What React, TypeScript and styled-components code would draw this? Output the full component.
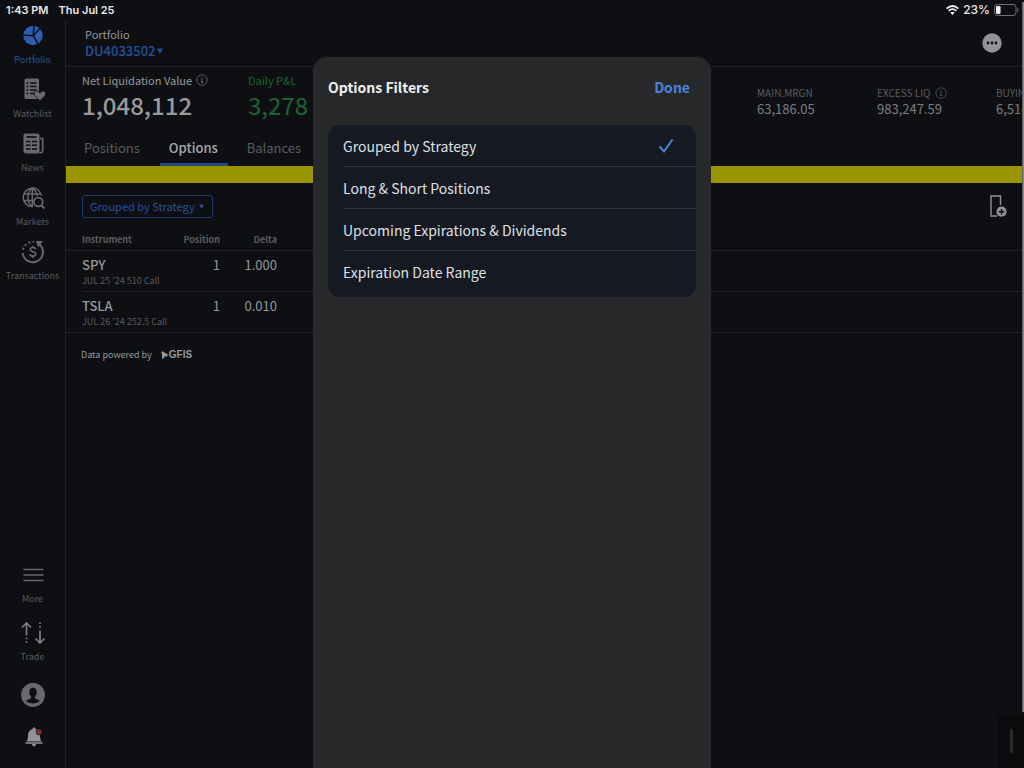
import React, { useState } from 'react';
import styled, { createGlobalStyle } from 'styled-components';

const c = {
  bg: '#0d0f13',
  line: '#202226',
  dim: '#5b5c5f',
  mid: '#7c7d80',
  text: '#96979a',
  blue: '#27519b',
  sheet: '#262829',
};

const Global = createGlobalStyle`
  *, *::before, *::after { box-sizing: border-box; }
  html, body { margin: 0; background: ${c.bg}; }
  body, button, input {
    font-family: "Noto Sans CJK SC", "Noto Sans", sans-serif;
  }
  button { border: 0; padding: 0; background: none; cursor: pointer; color: inherit; }
  svg { display: block; flex: none; }
`;

const Screen = styled.div`
  position: relative;
  display: flex;
  flex-direction: column;
  min-height: 100vh;
  overflow: hidden;
  background: ${c.bg};
  color: ${c.text};
`;

const StatusBar = styled.header`
  display: flex;
  justify-content: space-between;
  height: 20px;
  padding: 0 5px 0 6px;
  font: 600 11px/18px Inter, sans-serif;
  color: #e8e8ea;
`;

const StatusGroup = styled.div<{ $gap: number }>`
  display: flex;
  align-items: center;
  height: 20px;
  gap: ${(p) => p.$gap}px;
`;

const Percent = styled.span`
  font-size: 12px;
  font-weight: 500;
`;

const Body = styled.div`
  display: flex;
  flex: 1;
`;

const Sidebar = styled.aside`
  display: flex;
  flex-direction: column;
  justify-content: space-between;
  flex: none;
  width: 66px;
  border-right: 1px solid ${c.line};
`;

const NavList = styled.nav<{ $gap: number }>`
  display: flex;
  flex-direction: column;
  gap: ${(p) => p.$gap}px;
  padding-top: 4px;
`;

const NavItem = styled.a<{ $active?: boolean }>`
  display: flex;
  flex-direction: column;
  align-items: center;
  gap: 4px;
  font-size: 9px;
  line-height: 16px;
  text-decoration: none;
  color: ${(p) => (p.$active ? c.blue : c.dim)};
`;

const SidebarFoot = styled.div`
  display: flex;
  flex-direction: column;
  align-items: center;
  gap: 18px;
  padding-bottom: 19px;
`;

const Main = styled.main`
  flex: 1;
  min-width: 0;
`;

const AccountBar = styled.div`
  display: flex;
  align-items: center;
  justify-content: space-between;
  height: 47px;
  padding: 0 22px 1px 19px;
  border-bottom: 1px solid ${c.line};
`;

const AccountTitle = styled.div`
  font-size: 11px;
  line-height: 16px;
`;

const AccountButton = styled.button`
  display: flex;
  align-items: center;
  gap: 1px;
  font-size: 13px;
  line-height: 18px;
  font-weight: 500;
  color: ${c.blue};
`;

const Summary = styled.section`
  display: grid;
  grid-template-columns: 166px 1fr 267px;
  height: 62px;
  padding: 4px 0 0 16px;
  overflow: hidden;
`;

const Headline = styled.div<{ $green?: boolean }>`
  color: ${(p) => (p.$green ? '#1d6534' : '#98999c')};
  white-space: nowrap;
`;

const HeadlineLabel = styled.div`
  display: flex;
  align-items: center;
  gap: 4px;
  font-size: 11px;
  line-height: 18px;
`;

const HeadlineValue = styled.div<{ $strong?: boolean }>`
  font-size: 24px;
  line-height: 32px;
  font-weight: ${(p) => (p.$strong ? 500 : 400)};
`;

const Metrics = styled.div`
  display: grid;
  grid-template-columns: 120px 119px 120px;
  overflow: hidden;
  padding-top: 14px;
  white-space: nowrap;
`;

const MetricLabel = styled.div`
  display: flex;
  align-items: center;
  gap: 4px;
  font-size: 10px;
  line-height: 16px;
  color: ${c.dim};
`;

const MetricValue = styled.div`
  font-size: 13px;
  line-height: 15px;
  color: ${c.mid};
`;

const Tabs = styled.div`
  display: flex;
  gap: 10px;
  height: 37px;
  padding-left: 9px;
`;

const Tab = styled.button<{ $active?: boolean }>`
  padding: 3px 10px 0 9px;
  font-size: 13px;
  line-height: 30px;
  font-weight: ${(p) => (p.$active ? 500 : 400)};
  color: ${(p) => (p.$active ? '#a8a9ac' : c.dim)};
  border-bottom: 3px solid ${(p) => (p.$active ? '#274a80' : 'transparent')};
  border-radius: 2px 2px 0 0;
`;

const Banner = styled.div`
  height: 17px;
  background: #989500;
`;

const Toolbar = styled.div`
  display: flex;
  align-items: center;
  justify-content: space-between;
  height: 46px;
  padding: 0 17px 0 16px;
`;

const FilterButton = styled.button`
  display: flex;
  align-items: center;
  gap: 4px;
  height: 23px;
  padding: 0 8px 0 7px;
  border: 1px solid #1c3b72;
  border-radius: 3px;
  font-size: 11px;
  line-height: 20px;
  color: ${c.blue};
`;

const Table = styled.table`
  width: 100%;
  table-layout: fixed;
  border-collapse: separate;
  border-spacing: 0;
`;

const Th = styled.th<{ $left?: boolean; $w?: number }>`
  width: ${(p) => (p.$w ? `${p.$w}px` : 'auto')};
  height: 22px;
  padding: ${(p) => (p.$left ? '0 0 0 16px' : '0')};
  border-bottom: 1px solid ${c.line};
  font-size: 9px;
  line-height: 16px;
  font-weight: 700;
  text-align: ${(p) => (p.$left ? 'left' : 'right')};
  color: ${c.dim};
`;

const Row = styled.tr<{ $inset: number }>`
  background: linear-gradient(${c.line}, ${c.line}) ${(p) => p.$inset}px 100% / 100% 1px no-repeat;
`;

const Td = styled.td<{ $left?: boolean }>`
  height: 41px;
  padding: ${(p) => (p.$left ? '5px 0 3px 16px' : '5px 0 3px')};
  vertical-align: top;
  font-size: 13px;
  line-height: 18px;
  text-align: ${(p) => (p.$left ? 'left' : 'right')};
  white-space: nowrap;
`;

const Ticker = styled.div`
  font-weight: 500;
`;

const Contract = styled.div`
  font-size: 9px;
  line-height: 14px;
  color: ${c.dim};
`;

const Credit = styled.div`
  display: flex;
  align-items: center;
  gap: 8px;
  padding: 14px 15px;
  font-size: 9px;
  line-height: 16px;
`;

const Brand = styled.span`
  display: flex;
  align-items: center;
  font: 700 10px/16px "Liberation Sans", sans-serif;
`;

const Sheet = styled.section`
  position: absolute;
  top: 57px;
  bottom: 0;
  left: 0;
  right: 0;
  width: 398px;
  max-width: 100%;
  margin: 0 auto;
  padding: 0 15px;
  border-radius: 14px 14px 0 0;
  background: ${c.sheet};
`;

const SheetHeader = styled.div`
  display: flex;
  align-items: center;
  justify-content: space-between;
  height: 60px;
  margin-bottom: 8px;
  padding-right: 6px;
`;

const SheetTitle = styled.h2`
  margin: 0;
  font-size: 14px;
  line-height: 20px;
  font-weight: 700;
  color: #f0f0f2;
`;

const DoneButton = styled.button`
  font-size: 14px;
  line-height: 20px;
  font-weight: 700;
  color: #4a83dc;
`;

const Options = styled.div`
  padding: 0 0 5px 15px;
  border-radius: 12px;
  background: #161922;
`;

const Option = styled.label`
  display: flex;
  align-items: center;
  justify-content: space-between;
  height: 42px;
  padding: 0 22px 0 0;
  font-size: 14px;
  line-height: 20px;
  color: #dfe0e3;
  cursor: pointer;

  &:first-child { height: 41px; }
  & + & { border-top: 1px solid #30333b; }
`;

const CheckCell = styled.span`
  display: grid;
  width: 16px;
  height: 16px;

  & > * { grid-area: 1 / 1; }
`;

const Radio = styled.input`
  appearance: none;
  width: 16px;
  height: 16px;
  margin: 0;
`;

const DockPanel = styled.div`
  position: absolute;
  right: 0;
  bottom: 0;
  display: flex;
  align-items: center;
  justify-content: center;
  width: 26px;
  height: 54px;
  background: #0a0b0d;
`;

const DockHandle = styled.div`
  width: 3px;
  height: 24px;
  border-radius: 2px;
  background: #292a2d;
`;

const EdgeBar = styled.div`
  position: absolute;
  top: 2px;
  right: 0;
  bottom: 56px;
  width: 2px;
  background: linear-gradient(90deg, #4a4b4e, #a0a1a3);
`;

const Caret = ({ size = 6 }: { size?: number }) => (
  <svg width={size} height={size} viewBox="0 0 6 6" fill="currentColor" aria-hidden="true">
    <path d="M0 .5h6L3 5.8z" />
  </svg>
);

const InfoIcon = ({ color }: { color: string }) => (
  <svg width="12" height="12" viewBox="0 0 12 12" fill="none" stroke={color} aria-hidden="true">
    <circle cx="6" cy="6" r="5.2" strokeWidth=".7" />
    <path d="M6 3v1.200M5.200 5.300H6v3M4.800 8.400h2.400" strokeWidth=".8" />
  </svg>
);

const PortfolioIcon = () => (
  <svg width="24" height="24" viewBox="0 0 24 24" fill="#2e5cb0" aria-hidden="true">
    <circle cx="12" cy="11.500" r="9.700" />
    <path d="M12.300 11.800 13 1M12.300 11.800 1.800 11M12.300 11.800 18 21.500M12.300 11.800 20 3" fill="none" stroke={c.bg} strokeWidth="1.500" />
    <path d="M14.200 8.300 14.800 2.100 18 3.900z" />
  </svg>
);

const WatchlistIcon = () => (
  <svg width="24" height="24" viewBox="0 0 24 24" fill="#68696c" aria-hidden="true">
    <path d="M5 .5h11.500A1.500 1.500 0 0 1 18 2v17.500a1.500 1.500 0 0 1-1.500 1.500H5a1.500 1.500 0 0 1-1.500-1.500V2A1.500 1.500 0 0 1 5 .5z" />
    <path d="M5.500 5h2M9 5h6.500M5.500 8.500h2M9 8.500h6.500M5.500 12h2M9 12h6.500M5.500 15.500h2M9 15.500h4" stroke={c.bg} strokeWidth="1.300" />
    <path d="M19 22.800 14 17.800c-1.800-1.900-.7-4.800 1.800-4.800 1.400 0 2.500.8 3.200 2 .7-1.200 1.800-2 3.200-2 2.500 0 3.600 2.900 1.800 4.800z" stroke={c.bg} strokeWidth=".8" />
  </svg>
);

const NewsIcon = () => (
  <svg width="24" height="24" viewBox="0 0 24 24" aria-hidden="true">
    <path fill="#68696c" d="M2.500 3.500Q2.500 1.500 4.500 1.500h12q2 0 2 2V21.500h-13q-3 0-3-3z" />
    <path d="M5.500 5h10" stroke={c.bg} strokeWidth="1.700" />
    <path d="M5 9.500h4.500M11 9.500h5M5 13.200h4.500M11 13.200h5M5 17h4.500M11 17h5" stroke={c.bg} strokeWidth="1.600" />
    <path d="M19 6.500h2.700v12q0 2.300-3 2.300" fill="none" stroke="#68696c" strokeWidth="1.600" />
  </svg>
);

const MarketsIcon = () => (
  <svg width="24" height="24" viewBox="0 0 24 24" fill="none" stroke="#68696c" strokeWidth="1.500" aria-hidden="true">
    <path d="M12 20.500A9.200 9.200 0 1 1 20.500 10" />
    <path d="M11 20.500C5.500 16 5.500 6 11.300 2.200 14.500 4.500 16 7.500 16 10M11.300 2v18M3 8h16.500M2.500 14.500h10" />
    <circle cx="17.300" cy="16" r="4.400" strokeWidth="1.700" />
    <path d="m20.300 19.300 3 3.200" strokeWidth="1.900" />
  </svg>
);

const TransactionsIcon = () => (
  <svg width="26" height="24" viewBox="0 0 26 24" fill="none" stroke="#68696c" strokeWidth="1.900" aria-hidden="true">
    <path d="M2.600 13A10.200 10.200 0 1 0 19.800 4.600" />
    <path d="M3 9.500A10.200 10.200 0 0 1 14 2" strokeDasharray="1.900 2.500" />
    <path d="M16 1h7l-5 6.500z" fill="#68696c" stroke="none" />
    <path d="M15.700 9.200c-.3-1.200-1.400-1.700-2.700-1.700-1.500 0-2.700.7-2.700 2 0 2.900 5.500 1.500 5.500 4.500 0 1.400-1.300 2.100-2.800 2.100-1.600 0-2.700-.7-2.900-2M13 5.700v1.800M13 16v2" strokeWidth="1.500" />
  </svg>
);

const MoreIcon = () => (
  <svg width="24" height="24" viewBox="0 0 24 24" stroke="#68696c" strokeWidth="1.600" aria-hidden="true">
    <path d="M2.500 6.500h20M2.500 12h20M2.500 17.500h20" />
  </svg>
);

const TradeIcon = () => (
  <svg width="26" height="24" viewBox="0 0 26 24" fill="none" stroke={c.mid} strokeWidth="1.700" aria-hidden="true">
    <path d="M6.500 14.500V2.500M2 6.500 6.500 2 11 6.500M20 9.500V21.500M15.500 17.500 20 22l4.500-4.500" />
    <path d="M6.500 16.800v6M20 1.500v6" strokeDasharray="1.500 2" />
  </svg>
);

const ProfileIcon = () => (
  <svg width="24" height="24" viewBox="0 0 24 24" aria-hidden="true">
    <circle cx="12" cy="12" r="11.900" fill="#68696c" />
    <path fill={c.bg} d="M12 4.800c2.400 0 3.900 1.700 3.700 4.400-.1 1.900-.9 3.300-1.700 4.200v1.500c0 1 4.600 1.300 4.700 3.700Q12 22.500 5.300 18.600c.1-2.400 4.700-2.700 4.700-3.700v-1.500c-.8-.9-1.600-2.300-1.700-4.200-.2-2.700 1.300-4.400 3.700-4.400z" />
  </svg>
);

const BellIcon = () => (
  <svg width="24" height="24" viewBox="0 0 24 24" aria-hidden="true">
    <path fill="#939496" d="M13 2.500c.9 0 1.500.6 1.500 1.500 3 1 4.500 3.300 4.500 6.500 0 3 .4 4.500 1.500 6h-15c1.100-1.500 1.500-3 1.500-6 0-3.200 1.500-5.500 4.500-6.500 0-.9.600-1.500 1.500-1.500zM4.500 17.300h17v1.500h-17zM11 19h4c0 3-4 3-4 0z" />
    <circle cx="18" cy="7" r="3" fill="#7d3136" stroke={c.bg} strokeWidth=".6" />
  </svg>
);

const WifiIcon = () => (
  <svg width="13" height="10" viewBox="0 0 13 10" fill="none" stroke="#f2f2f3" strokeWidth="1.700" aria-hidden="true">
    <path d="M.6 3.600Q6.500-1.600 12.400 3.600M2.600 5.900Q6.500 2.500 10.400 5.900" />
    <path d="M4.300 7.600Q6.500 5.700 8.700 7.600L6.500 9.900z" fill="#f2f2f3" stroke="none" />
  </svg>
);

const BatteryIcon = () => (
  <svg width="25" height="12" viewBox="0 0 25 12" aria-hidden="true">
    <rect x=".5" y=".5" width="21.500" height="11" rx="3" fill="none" stroke="#6f7073" />
    <rect x="2" y="2" width="4.500" height="8" rx="1.200" fill="#f4f4f5" />
    <path d="M23.300 4v4q1.300-.6 1.300-2t-1.300-2z" fill="#6f7073" />
  </svg>
);

const AddColumnIcon = () => (
  <svg width="17" height="22" viewBox="0 0 17 22" fill="none" aria-hidden="true">
    <path d="M10.500 10V1H1v20h6" stroke="#919295" strokeWidth="1.400" />
    <circle cx="11.500" cy="16.700" r="5.100" fill="#919295" />
    <path d="M11.500 13.900v5.600M8.700 16.700h5.600" stroke={c.bg} strokeWidth="1.400" />
  </svg>
);

const navItems = [
  { label: 'Portfolio', icon: <PortfolioIcon /> },
  { label: 'Watchlist', icon: <WatchlistIcon /> },
  { label: 'News', icon: <NewsIcon /> },
  { label: 'Markets', icon: <MarketsIcon /> },
  { label: 'Transactions', icon: <TransactionsIcon /> },
];

const metrics = [
  { label: 'MAIN.MRGN', value: '63,186.05' },
  { label: 'EXCESS LIQ', value: '983,247.59', info: true },
  { label: 'BUYING POWER', value: '6,514,983' },
];

const holdings = [
  { ticker: 'SPY', contract: "JUL 25 '24 510 Call", position: '1', delta: '1.000' },
  { ticker: 'TSLA', contract: "JUL 26 '24 252.5 Call", position: '1', delta: '0.010' },
];

const filters = [
  'Grouped by Strategy',
  'Long & Short Positions',
  'Upcoming Expirations & Dividends',
  'Expiration Date Range',
];

export default function App() {
  const [filter, setFilter] = useState(filters[0]);

  return (
    <Screen>
      <Global />
      <StatusBar>
        <StatusGroup $gap={10}>
          <span>1:43 PM</span>
          <span>Thu Jul 25</span>
        </StatusGroup>
        <StatusGroup $gap={4}>
          <WifiIcon />
          <Percent>23%</Percent>
          <BatteryIcon />
        </StatusGroup>
      </StatusBar>

      <Body>
        <Sidebar>
          <NavList $gap={10}>
            {navItems.map((item, i) => (
              <NavItem key={item.label} href="#" $active={i === 0}>
                {item.icon}
                {item.label}
              </NavItem>
            ))}
          </NavList>
          <SidebarFoot>
            <NavList $gap={14}>
              <NavItem href="#"><MoreIcon />More</NavItem>
              <NavItem href="#"><TradeIcon />Trade</NavItem>
            </NavList>
            <button aria-label="Profile"><ProfileIcon /></button>
            <button aria-label="Notifications"><BellIcon /></button>
          </SidebarFoot>
        </Sidebar>

        <Main>
          <AccountBar>
            <div>
              <AccountTitle>Portfolio</AccountTitle>
              <AccountButton>DU4033502<Caret size={6} /></AccountButton>
            </div>
            <button aria-label="More actions">
              <svg width="20" height="20" viewBox="0 0 20 20" aria-hidden="true">
                <circle cx="10" cy="10" r="9.700" fill="#929396" />
                <circle cx="6" cy="10" r="1.400" fill={c.bg} />
                <circle cx="10" cy="10" r="1.400" fill={c.bg} />
                <circle cx="14" cy="10" r="1.400" fill={c.bg} />
              </svg>
            </button>
          </AccountBar>

          <Summary>
            <Headline>
              <HeadlineLabel>Net Liquidation Value<InfoIcon color={c.mid} /></HeadlineLabel>
              <HeadlineValue $strong>1,048,112</HeadlineValue>
            </Headline>
            <Headline $green>
              <HeadlineLabel>Daily P&amp;L</HeadlineLabel>
              <HeadlineValue>3,278</HeadlineValue>
            </Headline>
            <Metrics>
              {metrics.map((m) => (
                <div key={m.label}>
                  <MetricLabel>{m.label}{m.info && <InfoIcon color={c.dim} />}</MetricLabel>
                  <MetricValue>{m.value}</MetricValue>
                </div>
              ))}
            </Metrics>
          </Summary>

          <Tabs>
            <Tab>Positions</Tab>
            <Tab $active>Options</Tab>
            <Tab>Balances</Tab>
          </Tabs>
          <Banner />

          <Toolbar>
            <FilterButton>Grouped by Strategy<Caret size={5} /></FilterButton>
            <button aria-label="Add column"><AddColumnIcon /></button>
          </Toolbar>

          <Table>
            <thead>
              <tr>
                <Th $left $w={98}>Instrument</Th>
                <Th $w={56}>Position</Th>
                <Th $w={57}>Delta</Th>
                <Th aria-hidden="true" />
              </tr>
            </thead>
            <tbody>
              {holdings.map((h, i) => (
                <Row key={h.ticker} $inset={i === holdings.length - 1 ? 0 : 16}>
                  <Td $left>
                    <Ticker>{h.ticker}</Ticker>
                    <Contract>{h.contract}</Contract>
                  </Td>
                  <Td>{h.position}</Td>
                  <Td>{h.delta}</Td>
                  <Td />
                </Row>
              ))}
            </tbody>
          </Table>

          <Credit>
            Data powered by
            <Brand>
              <svg width="9" height="10" viewBox="0 0 9 10" aria-hidden="true">
                <path d="M0 2.500 2.500 1v4z" fill="#6b2c2c" />
                <path d="M2 1 8.500 5 2 9z" fill="#9a9ca0" />
                <path d="M2 9.500 8.500 5.500 4 6z" fill="#31618e" />
              </svg>
              GFIS
            </Brand>
          </Credit>
        </Main>
      </Body>

      <DockPanel><DockHandle /></DockPanel>
      <EdgeBar />

      <Sheet role="dialog" aria-labelledby="sheet-title">
        <SheetHeader>
          <SheetTitle id="sheet-title">Options Filters</SheetTitle>
          <DoneButton>Done</DoneButton>
        </SheetHeader>
        <Options role="radiogroup" aria-labelledby="sheet-title">
          {filters.map((name) => (
            <Option key={name}>
              {name}
              <CheckCell>
                <Radio type="radio" name="filter" checked={filter === name} onChange={() => setFilter(name)} />
                {filter === name && (
                  <svg width="16" height="16" viewBox="0 0 16 16" fill="none" stroke="#4a83dc" strokeWidth="2" aria-hidden="true">
                    <path d="M1.500 8.500 6 13.500 14.500 1.500" />
                  </svg>
                )}
              </CheckCell>
            </Option>
          ))}
        </Options>
      </Sheet>
    </Screen>
  );
}
